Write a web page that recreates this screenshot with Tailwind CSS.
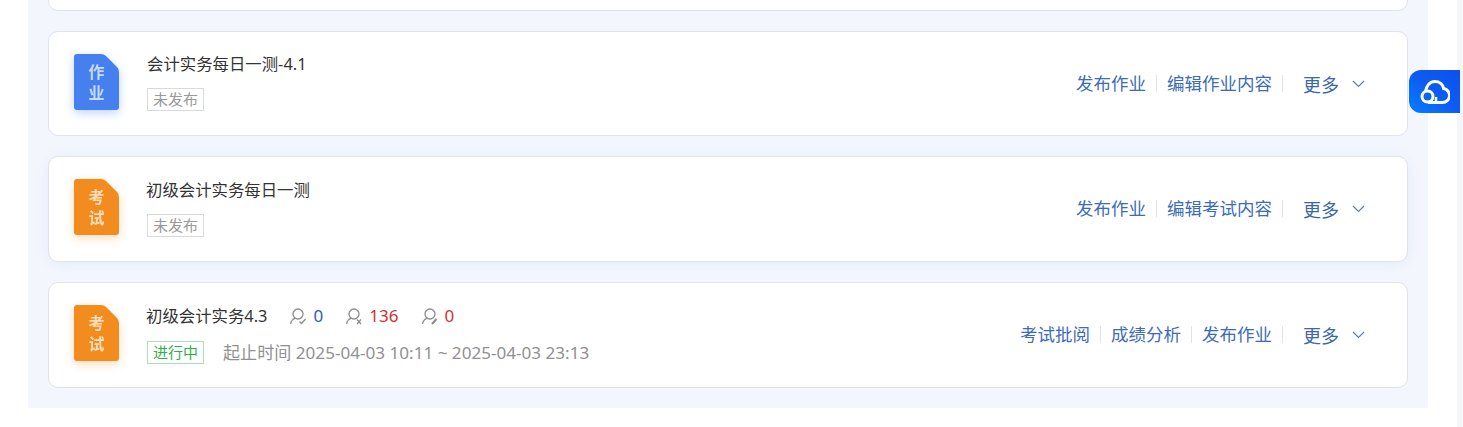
<!DOCTYPE html>
<html lang="zh-CN">
<head>
  <meta charset="UTF-8">
  <title>作业列表</title>
  <script src="https://cdn.jsdelivr.net/npm/@tailwindcss/browser@4"></script>
</head>
<body class="bg-white h-[427px] overflow-hidden relative font-['Noto_Sans','Noto_Sans_CJK_SC',sans-serif]">
  <main class="ml-[28px] w-[1400px] h-[408px] bg-[#f3f6fd] px-5 overflow-hidden">
    <!-- cut off by the top of the window -->
    <div class="h-[100px] -mt-[89px] mb-5 bg-white border border-[#dfe3ea] rounded-[10px]"></div>

    <div class="h-[105px] mb-5 bg-white border border-[#dfe3ea] rounded-[10px] flex items-center pl-[25px] pr-[41px]">
      <div class="relative w-[45px] h-[56px] mb-[3px] drop-shadow-[0_3px_5px_rgba(70,128,238,0.35)]">
        <svg class="absolute inset-0" width="45" height="56" viewBox="0 0 45 56" fill="#4680ee"><path d="M3 0H27Q30 0 32 2L43 13Q45 15 45 18V53A3 3 0 0 1 42 56H3A3 3 0 0 1 0 53V3A3 3 0 0 1 3 0Z"/></svg>
        <div class="relative pt-[8px] text-white/70 text-[16px] font-bold leading-[21px] text-center">作<br>业</div>
      </div>
      <div class="ml-[28px] mb-[2px] flex-1">
        <div class="text-[16.4px] leading-[20px] text-[#333]">会计实务每日一测-4.1</div>
        <div class="mt-[14px] flex items-center">
          <span class="w-[57px] h-[23px] border border-[#d9d9d9] text-[#999] text-[15px] leading-[21px] text-center">未发布</span>
        </div>
      </div>
      <div class="flex items-center text-[#3c6cb8] text-[17.5px]">
        <span>发布作业</span><i class="w-px h-[17px] bg-[#e3e3e3] mx-[10px]"></i>
        <span>编辑作业内容</span><i class="w-px h-[17px] bg-[#e3e3e3] mx-[10px]"></i>
        <span class="ml-[10px] mt-[4px] text-[18px] text-[#3d66a8]">更多</span>
        <svg class="ml-[12px]" width="15" height="15" viewBox="0 0 15 15" fill="none" stroke="#5b7fb8" stroke-width="1.2"><path d="M2 5l5.500 5.500L13 5"/></svg>
      </div>
    </div>

    <div class="h-[106px] mb-5 bg-white border border-[#dfe3ea] rounded-[10px] shadow-[0_2px_12px_rgba(80,110,200,0.08)] flex items-center pl-[25px] pr-[41px]">
      <div class="relative w-[45px] h-[56px] mb-[4px] drop-shadow-[0_3px_5px_rgba(242,140,30,0.3)]">
        <svg class="absolute inset-0" width="45" height="56" viewBox="0 0 45 56" fill="#f28c1e"><path d="M3 0H27Q30 0 32 2L43 13Q45 15 45 18V53A3 3 0 0 1 42 56H3A3 3 0 0 1 0 53V3A3 3 0 0 1 3 0Z"/></svg>
        <div class="relative pt-[8px] text-white/70 text-[16px] font-bold leading-[21px] text-center">考<br>试</div>
      </div>
      <div class="ml-[27px] mb-[2px] flex-1">
        <div class="text-[16.4px] leading-[20px] text-[#333]">初级会计实务每日一测</div>
        <div class="mt-[14px] ml-px flex items-center">
          <span class="w-[57px] h-[23px] border border-[#d9d9d9] text-[#999] text-[15px] leading-[21px] text-center">未发布</span>
        </div>
      </div>
      <div class="flex items-center mb-[2px] text-[#3c6cb8] text-[17.5px]">
        <span>发布作业</span><i class="w-px h-[17px] bg-[#e3e3e3] mx-[10px]"></i>
        <span>编辑考试内容</span><i class="w-px h-[17px] bg-[#e3e3e3] mx-[10px]"></i>
        <span class="ml-[10px] mt-[4px] text-[18px] text-[#3d66a8]">更多</span>
        <svg class="ml-[12px]" width="15" height="15" viewBox="0 0 15 15" fill="none" stroke="#5b7fb8" stroke-width="1.2"><path d="M2 5l5.500 5.500L13 5"/></svg>
      </div>
    </div>

    <div class="h-[106px] bg-white border border-[#dfe3ea] rounded-[10px] flex items-center pl-[25px] pr-[41px]">
      <div class="relative w-[45px] h-[56px] mb-[4px] drop-shadow-[0_3px_5px_rgba(242,140,30,0.3)]">
        <svg class="absolute inset-0" width="45" height="56" viewBox="0 0 45 56" fill="#f28c1e"><path d="M3 0H27Q30 0 32 2L43 13Q45 15 45 18V53A3 3 0 0 1 42 56H3A3 3 0 0 1 0 53V3A3 3 0 0 1 3 0Z"/></svg>
        <div class="relative pt-[8px] text-white/70 text-[16px] font-bold leading-[21px] text-center">考<br>试</div>
      </div>
      <div class="ml-[27px] flex-1">
        <div class="flex items-center text-[16.4px] leading-[20px] text-[#333]">
          <span>初级会计实务4.3</span>
          <svg class="ml-[21px]" width="18" height="18" viewBox="0 0 18 18" fill="none" stroke="#8c8c8c" stroke-width="1.3"><circle cx="9" cy="7" r="5"/><path d="M1.500 17c.5-3 2-5 4.500-5.700M10.500 14.500l2 2 4-4.500"/></svg>
          <span class="ml-[7px] text-[17px] text-[#2f5cb5]">0</span>
          <svg class="ml-[22px]" width="18" height="18" viewBox="0 0 18 18" fill="none" stroke="#8c8c8c" stroke-width="1.3"><circle cx="9" cy="7" r="5"/><path d="M1.500 17c.5-3 2-5 4.500-5.700M12 12.500l4 4.500M16 12.500L12 17"/></svg>
          <span class="ml-[6px] text-[17px] text-[#d0302f]">136</span>
          <svg class="ml-[23px]" width="18" height="18" viewBox="0 0 18 18" fill="none" stroke="#8c8c8c" stroke-width="1.3"><circle cx="9" cy="7" r="5"/><path d="M1.500 17c.5-3 2-5 4.500-5.700"/><path stroke-width="2" d="M11 17l4.500-5"/></svg>
          <span class="ml-[5px] text-[17px] text-[#d0302f]">0</span>
        </div>
        <div class="mt-[15px] ml-px flex items-center h-[23px]">
          <span class="w-[57px] h-[23px] border border-[#a9e2b4] text-[#2fae4a] text-[15px] leading-[21px] text-center">进行中</span>
          <span class="ml-[19px] text-[17.1px] text-[#919191]">起止时间 2025-04-03 10:11 ~ 2025-04-03 23:13</span>
        </div>
      </div>
      <div class="flex items-center mb-[2px] text-[#3c6cb8] text-[17.5px]">
        <span>考试批阅</span><i class="w-px h-[17px] bg-[#e3e3e3] mx-[10px]"></i>
        <span>成绩分析</span><i class="w-px h-[17px] bg-[#e3e3e3] mx-[10px]"></i>
        <span>发布作业</span><i class="w-px h-[17px] bg-[#e3e3e3] mx-[10px]"></i>
        <span class="ml-[10px] mt-[4px] text-[18px] text-[#3d66a8]">更多</span>
        <svg class="ml-[12px]" width="15" height="15" viewBox="0 0 15 15" fill="none" stroke="#5b7fb8" stroke-width="1.2"><path d="M2 5l5.500 5.500L13 5"/></svg>
      </div>
    </div>
  </main>

  <!-- floating cloud button -->
  <div class="absolute left-[1409px] top-[70px] w-[51px] h-[43px] rounded-l-[12px] bg-gradient-to-tr from-[#0b7efc] via-[#0d5cf2] to-[#0d50ee] flex items-center pl-[11px]">
    <svg width="30" height="24" viewBox="0 0 30 24" fill="none" stroke="#fff" stroke-width="3"><path d="M5.500 11.600C6.500 5.500 10 1.500 15 1.500c4.500 0 7.800 3 8.700 7.100a7 7 0 0 1-1.200 13.900H8"/><circle cx="7.500" cy="16.500" r="5.500"/><path d="M16 17v5" stroke-width="2.500"/></svg>
  </div>
  <div class="absolute left-[1457px] top-0 w-[6px] h-full bg-[#f5f6f8] -z-10"></div>
</body>
</html>
